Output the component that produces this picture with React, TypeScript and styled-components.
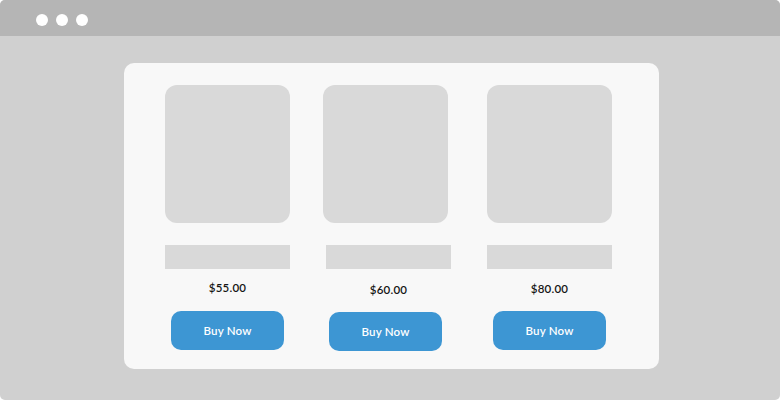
import React from "react";
import styled, { createGlobalStyle } from "styled-components";

const Global = createGlobalStyle`
  html, body { margin: 0; padding: 0; background: #ffffff; }
  body { font-family: "Lato", "Open Sans", sans-serif; }
`;

const Frame = styled.div`
  width: 780px;
  height: 400px;
  background: #d0d0d0;
  border-radius: 5px;
  overflow: hidden;
  display: flex;
  flex-direction: column;
`;

const TitleBar = styled.div`
  height: 36px;
  background: #b5b5b5;
  display: flex;
  align-items: center;
  gap: 8px;
  padding-left: 36px;
  flex-shrink: 0;
`;

const Dot = styled.span`
  width: 12px;
  height: 12px;
  border-radius: 50%;
  background: #ffffff;
  margin-top: 4px;
`;

const Stage = styled.div`
  flex: 1;
  padding: 27px 0 0 124px;
`;

const Panel = styled.div`
  width: 535px;
  height: 306px;
  box-sizing: border-box;
  background: #f8f8f8;
  border-radius: 10px;
  padding: 22px 0 0 41px;
  display: flex;
  align-items: flex-start;
`;

const Column = styled.div<{ $ml: number }>`
  width: 128px;
  margin-left: ${(p) => p.$ml}px;
  display: flex;
  flex-direction: column;
  align-items: flex-start;
`;

const Thumb = styled.div`
  width: 125px;
  height: 138px;
  border-radius: 12px;
  background: #d9d9d9;
`;

const NamePlaceholder = styled.div<{ $dx: number }>`
  width: 125px;
  height: 24px;
  margin-top: 22px;
  margin-left: ${(p) => p.$dx}px;
  background: #d9d9d9;
`;

const Price = styled.div<{ $dx: number; $mt: number }>`
  width: 125px;
  margin-left: ${(p) => p.$dx}px;
  margin-top: ${(p) => p.$mt}px;
  text-align: center;
  font-size: 11.5px;
  line-height: 14px;
  font-weight: 600;
  color: #151515;
  letter-spacing: 0.2px;
`;

const BuyButton = styled.button<{ $mt: number }>`
  width: 113px;
  height: 39px;
  margin-top: ${(p) => p.$mt}px;
  margin-left: 6px;
  border: none;
  border-radius: 10px;
  background: #3d96d3;
  color: #ffffff;
  font-family: "Lato", "Open Sans", sans-serif;
  font-size: 11.5px;
  font-weight: 600;
  letter-spacing: 0.2px;
  padding: 0;
  cursor: pointer;
`;

const products = [
  { price: "$55.00", ml: 0, dx: 0, pm: 12, bm: 16 },
  { price: "$60.00", ml: 30, dx: 3, pm: 14, bm: 15 },
  { price: "$80.00", ml: 36, dx: 0, pm: 13, bm: 15 },
];

export default function App() {
  return (
    <>
      <Global />
      <Frame>
        <TitleBar>
          <Dot />
          <Dot />
          <Dot />
        </TitleBar>
        <Stage>
          <Panel>
            {products.map((p, i) => (
              <Column key={i} $ml={p.ml}>
                <Thumb />
                <NamePlaceholder $dx={p.dx} />
                <Price $dx={p.dx} $mt={p.pm}>{p.price}</Price>
                <BuyButton $mt={p.bm}>Buy Now</BuyButton>
              </Column>
            ))}
          </Panel>
        </Stage>
      </Frame>
    </>
  );
}
